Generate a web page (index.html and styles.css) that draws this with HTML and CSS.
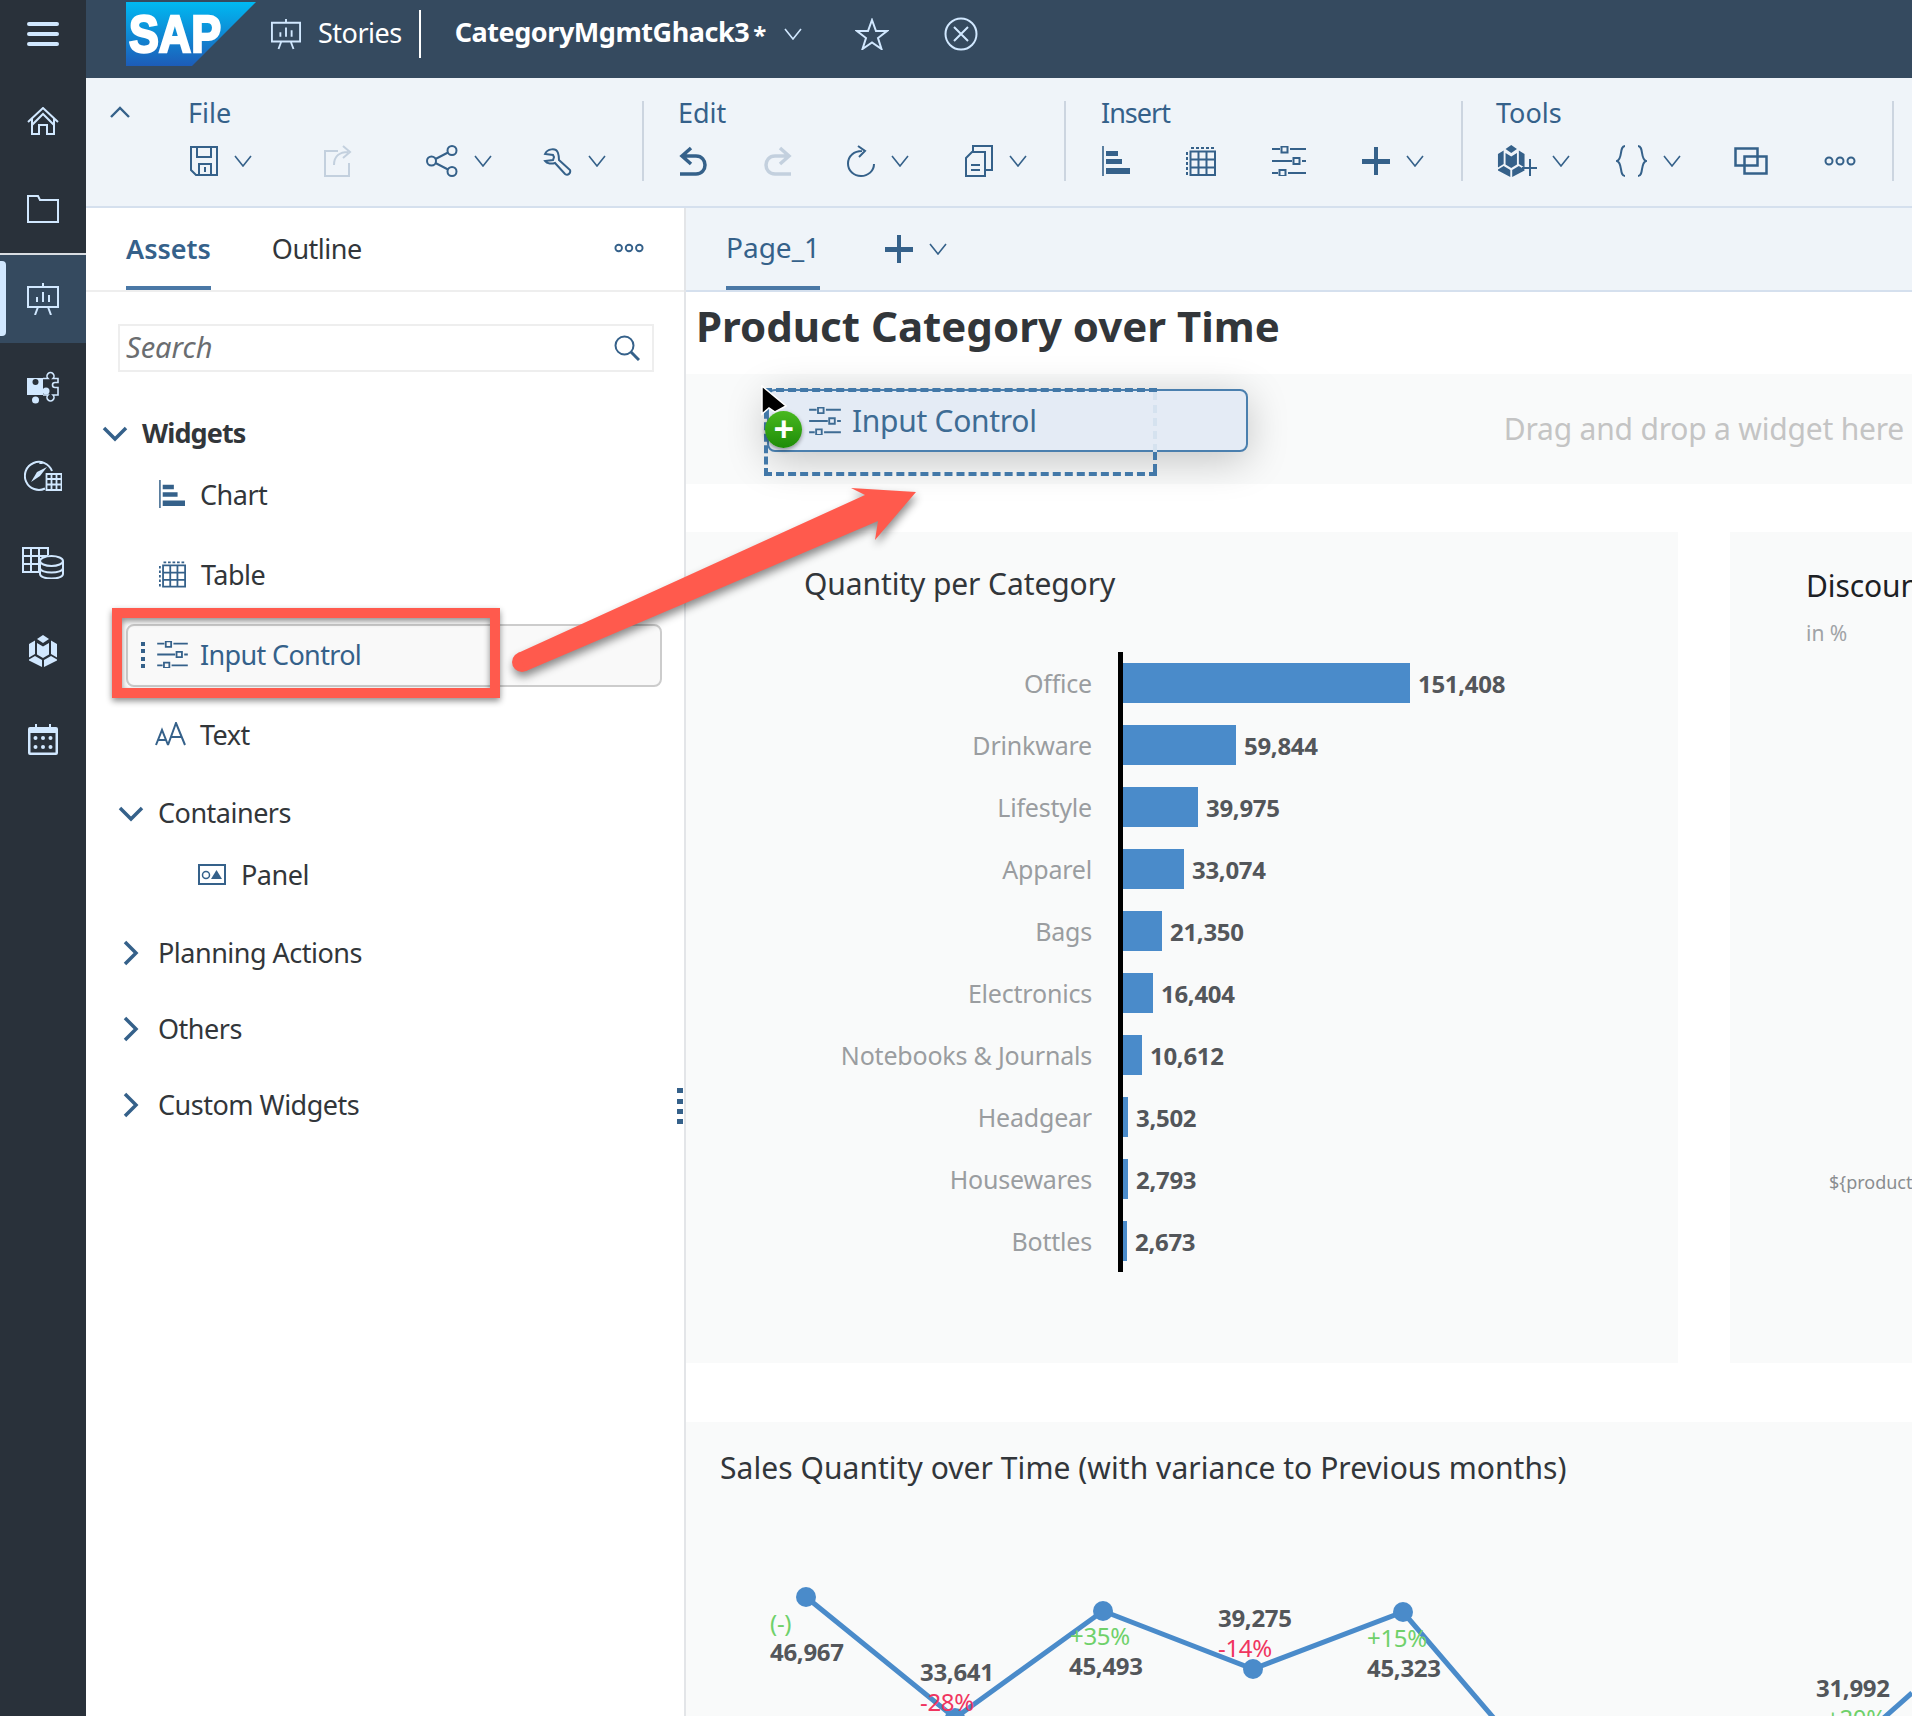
FILE: index.html
```html
<!DOCTYPE html>
<html lang="en">

<head>
    <meta charset="UTF-8">
    <title>CategoryMgmtGhack3 - Stories</title>
    <link rel="stylesheet" href="styles.css">
</head>

<body>

    <!-- shared icons -->
    <svg class="sprite" width="0" height="0">
        <symbol id="i-chev" viewBox="0 0 18 12"><path d="M1 1l8 10 8-10" fill="none" stroke="currentColor" stroke-width="1.6"/></symbol>
        <symbol id="i-chart" viewBox="0 0 28 30">
            <path d="M1 0v30" stroke="currentColor" stroke-width="1.6"/>
            <path d="M4 5h12v5H4zM4 13h16v5H4zM4 22h24v6H4z" fill="currentColor"/>
        </symbol>
        <symbol id="i-table" viewBox="0 0 30 30">
            <path d="M5 2h3M10 2h3M15 2h3M20 2h3M25 2h3M1 6v3M1 11v3M1 16v3M1 21v3M1 26v3" stroke="currentColor" stroke-width="2" fill="none"/>
            <path d="M4.500 5.500h24.500v23.500H4.500zM4.500 13.500h24.500M4.500 21.500h24.500M12.500 5.500v23.500M20.500 5.500v23.500" stroke="currentColor" stroke-width="2" fill="none"/>
        </symbol>
        <symbol id="i-sliders" viewBox="0 0 34 30">
            <path d="M0 3h8M18 3h16M0 15h20M30 15h4M0 27h6M16 27h18" stroke="currentColor" stroke-width="2" fill="none"/>
            <path d="M9.500 0.500h6v6h-6zM21.500 12h6v6h-6zM7.500 24h6v6h-6z" stroke="currentColor" stroke-width="2" fill="none"/>
        </symbol>
        <symbol id="i-cube" viewBox="0 0 30 32">
            <path d="M15 0l6 4-6 4-6-4zM1 9l6-3.500V19l-6 3.500zM29 9l-6-3.500V19l6 3.500zM9 8l6 3.500L21 8v11.500L15 23l-6-3.500zM1 24.500l6-3.500 7 4v7L1 25.500zM29 24.500L23 21l-7 4v7l13-6.500z" fill="currentColor"/>
        </symbol>
    </svg>

    <nav class="side-nav">
        <button class="nav-btn nav-menu">
            <svg width="32" height="24" viewBox="0 0 32 24"><path d="M2 2h28M2 12h28M2 22h28" stroke="currentColor" stroke-width="4" stroke-linecap="round"/></svg>
        </button>
        <button class="nav-btn">
            <svg width="32" height="28" viewBox="0 0 32 28" fill="none" stroke="currentColor" stroke-width="2"><path d="M1 15L16 1l15 14M5 11v16h7v-9h8v9h7V11M5 18L16 7l11 11"/></svg>
        </button>
        <button class="nav-btn nav-folder">
            <svg width="32" height="28" viewBox="0 0 32 28" fill="none" stroke="currentColor" stroke-width="2"><path d="M1 27V1h10l2 4h18v22z"/></svg>
        </button>
        <button class="nav-btn nav-active">
            <svg width="32" height="32" viewBox="0 0 32 32" fill="none" stroke="currentColor" stroke-width="2"><path d="M1 4h30v20H1zM16 0v4M11 24l-3 8M21 24l3 8M10 19v-5M16 19V9M22 19v-7"/></svg>
        </button>
        <button class="nav-btn">
            <svg width="32" height="33" viewBox="0 0 32 33">
                <path d="M0 7h16v17H0z" fill="currentColor"/>
                <circle cx="8.500" cy="29" r="3.500" fill="currentColor"/>
                <circle cx="19" cy="20" r="3.500" fill="currentColor"/>
                <circle cx="8.500" cy="11" r="3" fill="#29313a"/>
                <path d="M16 7.500h5a3.500 3.500 0 1 1 5 0h5v4h-3a2.500 2.500 0 1 0 0 5h3v7.500h-5a3.500 3.500 0 1 1-5 0h-5" fill="none" stroke="currentColor" stroke-width="1.600"/>
            </svg>
        </button>
        <button class="nav-btn">
            <svg width="38" height="32" viewBox="0 0 38 32" fill="none" stroke="currentColor" stroke-width="2"><path d="M21 29.500A14 14 0 1 1 28 12"/><path d="M7 23l6-10 10-5-7 9z" fill="currentColor" stroke="none"/><path d="M15 5l2-3 2 3z" fill="currentColor" stroke="none"/><path d="M22.500 15h15v16h-15zM22.500 20h15M22.500 25.500h15M27.500 15v16M32.500 15v16" stroke-width="1.800"/></svg>
        </button>
        <button class="nav-btn">
            <svg width="42" height="32" viewBox="0 0 42 32" fill="none" stroke="currentColor" stroke-width="2"><path d="M17 25H1V1h25v7M1 9h25M1 17h16M9 1v24M17 1v24"/><ellipse cx="29.500" cy="14" rx="11.500" ry="5"/><path d="M18 14v13c0 6 23 6 23 0V14M18 21c0 6 23 6 23 0"/></svg>
        </button>
        <button class="nav-btn">
            <svg width="30" height="32"><use href="#i-cube"/></svg>
        </button>
        <button class="nav-btn">
            <svg width="30" height="32" viewBox="0 0 30 32"><path d="M2 4h5V1h2v3h12V1h2v3h5a2 2 0 0 1 2 2v24a2 2 0 0 1-2 2H2a2 2 0 0 1-2-2V6a2 2 0 0 1 2-2zM2.500 10v19.500h25V10z" fill="currentColor" fill-rule="evenodd"/><g fill="currentColor"><circle cx="7.500" cy="15" r="2"/><circle cx="15" cy="15" r="2"/><circle cx="22.500" cy="15" r="2"/><circle cx="7.500" cy="24" r="2"/><circle cx="15" cy="24" r="2"/><circle cx="22.500" cy="24" r="2"/></g></svg>
        </button>
    </nav>

    <div class="app">

        <header class="shell-bar">
            <svg class="sap-logo" width="130" height="64" viewBox="0 0 130 64">
                <defs>
                    <linearGradient id="sap-grad" x1="0" y1="0" x2="0" y2="1">
                        <stop offset="0" stop-color="#00b9f2"/>
                        <stop offset="1" stop-color="#1d5cb8"/>
                    </linearGradient>
                </defs>
                <path d="M0 0h130L66 64H0z" fill="url(#sap-grad)"/>
                <text x="3" y="50" textLength="92" lengthAdjust="spacingAndGlyphs" class="sap-word">SAP</text>
            </svg>
            <svg class="shell-icon" width="30" height="32" viewBox="0 0 32 32" fill="none" stroke="currentColor" stroke-width="2"><path d="M1 4h30v20H1zM16 0v4M11 24l-3 8M21 24l3 8M10 19v-5M16 19V9M22 19v-7"/></svg>
            <span class="shell-stories">Stories</span>
            <span class="shell-title">CategoryMgmtGhack3<span class="shell-dirty">*</span></span>
            <svg class="shell-chev"><use href="#i-chev"/></svg>
            <svg class="shell-star" width="34" height="32" viewBox="0 0 34 32"><path d="M17 2l4 11h11l-9 7 3.500 11L17 24.500 7.500 31 11 20l-9-7h11z" fill="none" stroke="currentColor" stroke-width="2"/></svg>
            <svg class="shell-close" width="34" height="34" viewBox="0 0 34 34" fill="none" stroke="currentColor" stroke-width="2"><circle cx="17" cy="17" r="15.500"/><path d="M10 10l14 14M24 10L10 24"/></svg>
        </header>

        <section class="toolbar">
            <svg class="collapse" width="20" height="12" viewBox="0 0 20 12"><path d="M1 11l9-9 9 9" fill="none" stroke="currentColor" stroke-width="2.400"/></svg>

            <div class="tool-group group-file">
                <div class="group-label">File</div>
                <div class="tools">
                    <div class="tool">
                        <svg width="28" height="30" viewBox="0 0 28 30" fill="none" stroke="currentColor" stroke-width="2"><path d="M1 1h26v28H6l-5-5zM7 1v10h14V1M9 29V18h12v11M15 21v5"/></svg>
                        <svg class="chev"><use href="#i-chev"/></svg>
                    </div>
                    <div class="tool tool-off">
                        <svg width="32" height="32" viewBox="0 0 32 32" fill="none" stroke="currentColor" stroke-width="2"><path d="M14 6H1v25h24V18M10 20c0-9 6-13 14-13M19 1l7 6-7 6"/></svg>
                    </div>
                    <div class="tool">
                        <svg width="32" height="32" viewBox="0 0 32 32" fill="none" stroke="currentColor" stroke-width="2"><circle cx="5.500" cy="16" r="4.500"/><circle cx="26" cy="5.500" r="4.500"/><circle cx="26" cy="26.500" r="4.500"/><path d="M9.500 14L22 7.500M9.500 18L22 24.500"/></svg>
                        <svg class="chev"><use href="#i-chev"/></svg>
                    </div>
                    <div class="tool">
                        <svg width="29" height="29" viewBox="0 0 29 29" fill="none" stroke="currentColor" stroke-width="2"><path d="M2 7C4 2 13 0 15 6c1 3 1 5 1 7l11 10c1 3-2 6-5 4L12 16c-3 1-8 1-10-2l8-1 1-3-1-2z"/></svg>
                        <svg class="chev"><use href="#i-chev"/></svg>
                    </div>
                </div>
            </div>

            <div class="tool-group group-edit">
                <div class="group-label">Edit</div>
                <div class="tools">
                    <div class="tool">
                        <svg width="28" height="30" viewBox="0 0 28 30" fill="none" stroke="currentColor" stroke-width="3.500"><path d="M12 2L3 10l9 8M3 10h14c12 0 12 18 0 18H1"/></svg>
                    </div>
                    <div class="tool tool-off">
                        <svg width="28" height="30" viewBox="0 0 28 30" fill="none" stroke="currentColor" stroke-width="3.500"><path d="M16 2l9 8-9 8M25 10H11C-1 10-1 28 11 28h16"/></svg>
                    </div>
                    <div class="tool">
                        <svg width="28" height="32" viewBox="0 0 28 32" fill="none" stroke="currentColor" stroke-width="2"><path d="M15 6C7 6 1 11 1 18.500S7 31 14 31s13-5 13-12M11 1l7 5-6 6"/></svg>
                        <svg class="chev"><use href="#i-chev"/></svg>
                    </div>
                    <div class="tool">
                        <svg width="28" height="32" viewBox="0 0 28 32" fill="none" stroke="currentColor" stroke-width="2"><path d="M1 13l6-6h13v24H1zM8 7V1h19v24h-7M6 20h9M6 25h9"/></svg>
                        <svg class="chev"><use href="#i-chev"/></svg>
                    </div>
                </div>
            </div>

            <div class="tool-group group-insert">
                <div class="group-label">Insert</div>
                <div class="tools">
                    <div class="tool"><svg width="28" height="30"><use href="#i-chart"/></svg></div>
                    <div class="tool"><svg width="30" height="30"><use href="#i-table"/></svg></div>
                    <div class="tool"><svg width="34" height="30"><use href="#i-sliders"/></svg></div>
                    <div class="tool">
                        <svg width="28" height="28" viewBox="0 0 28 28"><path d="M12 0h4v12h12v5H16v11h-4V17H0v-5h12z" fill="currentColor"/></svg>
                        <svg class="chev"><use href="#i-chev"/></svg>
                    </div>
                </div>
            </div>

            <div class="tool-group group-tools">
                <div class="group-label">Tools</div>
                <div class="tools">
                    <div class="tool">
                        <svg width="40" height="32" viewBox="0 0 40 32"><g transform="scale(.95 1)"><use href="#i-cube" width="30" height="32"/></g><path d="M33 14v17M25 23h15" stroke="currentColor" stroke-width="2"/></svg>
                        <svg class="chev chev-tight"><use href="#i-chev"/></svg>
                    </div>
                    <div class="tool">
                        <svg width="31" height="32" viewBox="0 0 31 32" fill="none" stroke="currentColor" stroke-width="2"><path d="M9 1C3 1 7 14 1 16c6 2 2 15 8 15M22 1c6 0 2 13 8 15-6 2-2 15-8 15"/></svg>
                        <svg class="chev"><use href="#i-chev"/></svg>
                    </div>
                    <div class="tool">
                        <svg width="34" height="28" viewBox="0 0 34 28" fill="none" stroke="currentColor" stroke-width="2.500"><path d="M1.500 1.500h22v17h-22zM10.500 9.500h22v17h-22z"/></svg>
                    </div>
                    <div class="tool">
                        <svg width="32" height="10" viewBox="0 0 32 10" fill="none" stroke="currentColor" stroke-width="2"><circle cx="5" cy="5" r="3.500"/><circle cx="16" cy="5" r="3.500"/><circle cx="27" cy="5" r="3.500"/></svg>
                    </div>
                </div>
            </div>
        </section>

        <div class="workspace">

            <aside class="assets">
                <div class="asset-tabs">
                    <span class="asset-tab asset-tab-on">Assets</span>
                    <span class="asset-tab">Outline</span>
                    <svg class="asset-more" width="30" height="10" viewBox="0 0 32 10" fill="none" stroke="currentColor" stroke-width="2"><circle cx="5" cy="5" r="3.500"/><circle cx="16" cy="5" r="3.500"/><circle cx="27" cy="5" r="3.500"/></svg>
                </div>

                <div class="search">
                    <span>Search</span>
                    <svg width="26" height="26" viewBox="0 0 26 26" fill="none" stroke="currentColor" stroke-width="2"><circle cx="10.500" cy="10.500" r="9"/><path d="M17 17l8 8" stroke-width="3"/></svg>
                </div>

                <ul class="tree">
                    <li class="tree-head tree-main">
                        <svg class="caret-down" viewBox="0 0 26 16"><path d="M2 2l11 11L24 2" fill="none" stroke="currentColor" stroke-width="3.500"/></svg>
                        Widgets
                    </li>
                    <li class="tree-item">
                        <svg width="26" height="28"><use href="#i-chart"/></svg>
                        Chart
                    </li>
                    <li class="tree-item">
                        <svg width="27" height="28"><use href="#i-table"/></svg>
                        Table
                    </li>
                    <li class="tree-item tree-picked">
                        <svg class="grip" width="4" height="26" viewBox="0 0 4 26"><path d="M0 0h4v4H0zM0 7h4v4H0zM0 15h4v4H0zM0 22h4v4H0z" fill="currentColor"/></svg>
                        <svg width="31" height="27"><use href="#i-sliders"/></svg>
                        Input Control
                        <div class="callout"></div>
                    </li>
                    <li class="tree-item tree-text">
                        <svg width="33" height="24" viewBox="0 0 33 24" fill="none" stroke="currentColor" stroke-width="2"><path d="M1 23L7 8l6 15M3 18h8M13 23l8-22 9 22M16 15h11"/></svg>
                        Text
                    </li>
                    <li class="tree-head tree-open">
                        <svg class="caret-down" viewBox="0 0 26 16"><path d="M2 2l11 11L24 2" fill="none" stroke="currentColor" stroke-width="3.500"/></svg>
                        Containers
                    </li>
                    <li class="tree-item tree-panel">
                        <svg width="28" height="21" viewBox="0 0 28 21"><path d="M1 1h26v19H1z" fill="none" stroke="currentColor" stroke-width="2"/><circle cx="8" cy="11" r="3.500" fill="none" stroke="currentColor" stroke-width="1.500"/><path d="M13 15l5.500-9 5.500 9z" fill="currentColor"/></svg>
                        Panel
                    </li>
                    <li class="tree-head">
                        <svg class="caret-right" viewBox="0 0 16 26"><path d="M2 2l11 11L2 24" fill="none" stroke="currentColor" stroke-width="3.500"/></svg>
                        Planning Actions
                    </li>
                    <li class="tree-head">
                        <svg class="caret-right" viewBox="0 0 16 26"><path d="M2 2l11 11L2 24" fill="none" stroke="currentColor" stroke-width="3.500"/></svg>
                        Others
                    </li>
                    <li class="tree-head">
                        <svg class="caret-right" viewBox="0 0 16 26"><path d="M2 2l11 11L2 24" fill="none" stroke="currentColor" stroke-width="3.500"/></svg>
                        Custom Widgets
                    </li>
                </ul>

                <svg class="resize-grip" width="6" height="36" viewBox="0 0 6 36"><path d="M0 0h6v5H0zM0 11h6v5H0zM0 21h6v5H0zM0 31h6v5H0z" fill="currentColor"/></svg>
            </aside>

            <main class="canvas">
                <div class="page-tabs">
                    <span class="page-tab">Page_1</span>
                    <svg class="page-add" width="28" height="28" viewBox="0 0 28 28"><path d="M12 0h4v12h12v5H16v11h-4V17H0v-5h12z" fill="currentColor"/></svg>
                    <svg class="chev"><use href="#i-chev"/></svg>
                </div>

                <div class="story">
                    <h1 class="story-title">Product Category over Time</h1>

                    <div class="drop-zone">
                        <span class="drop-hint">Drag and drop a widget here</span>
                        <div class="drag-ghost">
                            <svg width="34" height="28"><use href="#i-sliders"/></svg>
                            Input Control
                        </div>
                        <div class="drag-outline"></div>
                        <svg class="drag-cursor" width="26" height="34" viewBox="0 0 26 34"><path d="M1 1v28l7-6 6 4 11-6z" fill="#000" stroke="#fff" stroke-width="1.500"/></svg>
                        <div class="drag-add">+</div>
                    </div>

                    <div class="card-row">
                        <section class="card card-bars">
                            <h2 class="card-title">Quantity per Category</h2>
                            <div class="bars">
                                <div class="bar-row"><span class="bar-label">Office</span><div class="bar-track"><i style="width: 287px"></i><b>151,408</b></div></div>
                                <div class="bar-row"><span class="bar-label">Drinkware</span><div class="bar-track"><i style="width: 113px"></i><b>59,844</b></div></div>
                                <div class="bar-row"><span class="bar-label">Lifestyle</span><div class="bar-track"><i style="width: 75px"></i><b>39,975</b></div></div>
                                <div class="bar-row"><span class="bar-label">Apparel</span><div class="bar-track"><i style="width: 61px"></i><b>33,074</b></div></div>
                                <div class="bar-row"><span class="bar-label">Bags</span><div class="bar-track"><i style="width: 39px"></i><b>21,350</b></div></div>
                                <div class="bar-row"><span class="bar-label">Electronics</span><div class="bar-track"><i style="width: 30px"></i><b>16,404</b></div></div>
                                <div class="bar-row"><span class="bar-label">Notebooks &amp; Journals</span><div class="bar-track"><i style="width: 19px"></i><b>10,612</b></div></div>
                                <div class="bar-row"><span class="bar-label">Headgear</span><div class="bar-track"><i style="width: 5px"></i><b>3,502</b></div></div>
                                <div class="bar-row"><span class="bar-label">Housewares</span><div class="bar-track"><i style="width: 5px"></i><b>2,793</b></div></div>
                                <div class="bar-row"><span class="bar-label">Bottles</span><div class="bar-track"><i style="width: 4px"></i><b>2,673</b></div></div>
                            </div>
                        </section>

                        <section class="card card-discount">
                            <h2 class="card-title">Discount</h2>
                            <div class="card-sub">in %</div>
                            <div class="card-token">${productCategory}</div>
                        </section>
                    </div>

                    <section class="card card-line">
                        <h2 class="card-title">Sales Quantity over Time (with variance to Previous months)</h2>
                        <svg class="line-chart" width="1226" height="228" viewBox="686 1488 1226 228">
                            <polyline class="line" points="806,1597 955,1718 1103,1611 1253,1669 1403,1612 1504,1730"/>
                            <polyline class="line" points="1870,1730 1912,1693"/>
                            <circle class="dot" cx="806" cy="1597" r="10"/>
                            <circle class="dot" cx="955" cy="1718" r="10"/>
                            <circle class="dot" cx="1103" cy="1611" r="10"/>
                            <circle class="dot" cx="1253" cy="1669" r="10"/>
                            <circle class="dot" cx="1403" cy="1612" r="10"/>
                            <text class="val" x="770" y="1661">46,967</text>
                            <text class="up" x="770" y="1632">(-)</text>
                            <text class="val" x="920" y="1681">33,641</text>
                            <text class="down" x="920" y="1711">-28%</text>
                            <text class="up" x="1070" y="1645">+35%</text>
                            <text class="val" x="1069" y="1675">45,493</text>
                            <text class="val" x="1218" y="1627">39,275</text>
                            <text class="down" x="1218" y="1657">-14%</text>
                            <text class="up" x="1367" y="1647">+15%</text>
                            <text class="val" x="1367" y="1677">45,323</text>
                            <text class="val" x="1816" y="1697">31,992</text>
                            <text class="up" x="1826" y="1727">+20%</text>
                        </svg>
                    </section>
                </div>
            </main>
        </div>
    </div>

    <!-- annotation drawn over the screenshot -->
    <svg class="arrow" width="440" height="210" viewBox="500 470 440 210">
        <circle cx="522" cy="662" r="10"/>
        <polygon points="518,653 865,495 851,488 916,492 875,540 878,521 526,671"/>
    </svg>

</body>

</html>
```

FILE: styles.css
```css
* {
    box-sizing: border-box;
}

html,
body {
    margin: 0;
    width: 1912px;
    height: 1716px;
    overflow: hidden;
}

body {
    display: flex;
    position: relative;
    font-family: "Noto Sans", Arial, sans-serif;
    font-size: 27px;
    letter-spacing: -.5px;
    color: #32363a;
    background-color: #fff;
}

.sprite {
    position: absolute;
}

svg {
    display: block;
    flex: none;
}

/* left rail */

.side-nav {
    width: 86px;
    flex: none;
    display: flex;
    flex-direction: column;
    background-color: #29313a;
    color: #d1e8ff;
}

.nav-btn {
    height: 88px;
    padding: 0;
    border: 0;
    background: none;
    color: inherit;
    display: flex;
    align-items: center;
    justify-content: center;
}

.nav-menu {
    height: 77px;
    padding-bottom: 10px;
}

.nav-folder {
    height: 90px;
    border-bottom: 2px solid #d9dde2;
}

.nav-active {
    position: relative;
    background-color: #354a5f;
}

.nav-active::before {
    content: "";
    position: absolute;
    left: 0;
    top: 6px;
    bottom: 7px;
    width: 6px;
    border-radius: 0 4px 4px 0;
    background-color: #d1e8ff;
}

.app {
    flex: 1;
    min-width: 0;
    display: flex;
    flex-direction: column;
}

/* top bar */

.shell-bar {
    height: 78px;
    flex: none;
    display: flex;
    align-items: center;
    padding: 0 0 10px 40px;
    background-color: #354a5f;
    color: #d1e8ff;
}

.sap-word {
    font-family: "Liberation Sans", Arial, sans-serif;
    font-weight: 700;
    font-size: 52px;
    fill: #fff;
    stroke: #fff;
    stroke-width: 2.5px;
    letter-spacing: 0;
}

.shell-icon {
    margin-left: 15px;
}

.shell-stories {
    margin-left: 17px;
    padding-right: 17px;
    height: 48px;
    line-height: 46px;
    color: #fff;
    border-right: 2px solid #fff;
}

.shell-title {
    margin: 0 0 4px 34px;
    font-weight: 700;
    letter-spacing: -.45px;
    color: #fff;
    white-space: nowrap;
}

.shell-dirty {
    margin-left: 4px;
    font-size: 24px;
    vertical-align: -2px;
}

.shell-chev {
    width: 18px;
    height: 12px;
    margin-left: 18px;
}

.shell-star {
    margin-left: 53px;
}

.shell-close {
    margin-left: 55px;
}

/* ribbon */

.toolbar {
    height: 130px;
    flex: none;
    display: flex;
    position: relative;
    padding-top: 23px;
    background-color: #eff4f9;
    border-bottom: 2px solid #d5e0ee;
    color: #35618a;
}

.collapse {
    position: absolute;
    left: 24px;
    top: 28px;
}

.tool-group {
    height: 80px;
    border-right: 2px solid #ccd5e0;
    letter-spacing: 0;
}

.group-file {
    width: 558px;
    padding-left: 102px;
}

.group-edit {
    width: 422px;
    padding-left: 34px;
}

.group-insert {
    width: 397px;
    padding-left: 35px;
}

.group-tools {
    width: 431px;
    padding-left: 33px;
}

.group-label {
    height: 32px;
    line-height: 24px;
    white-space: nowrap;
}

.group-insert .group-label {
    letter-spacing: -1px;
}

.tools {
    display: grid;
    height: 56px;
    align-items: center;
}

.group-file .tools {
    grid-template-columns: 134px 102px 117px auto;
    padding-left: 2px;
}

.group-edit .tools {
    grid-template-columns: 85px 83px 118px auto;
    padding-left: 1px;
}

.group-insert .tools {
    grid-template-columns: 84px 86px 90px auto;
    padding-left: 1px;
}

.group-tools .tools {
    grid-template-columns: 119px 118px 90px auto;
    padding-left: 1px;
}

.tool {
    display: flex;
    align-items: center;
}

.tool-off {
    color: #c3d0de;
}

.chev {
    width: 18px;
    height: 12px;
    margin-left: 16px;
}

.chev-tight {
    margin-left: 15px;
}

/* body split */

.workspace {
    flex: 1;
    min-height: 0;
    display: flex;
}

.assets {
    width: 600px;
    flex: none;
    position: relative;
    border-right: 2px solid #e3e5e8;
}

.asset-tabs {
    height: 84px;
    display: flex;
    align-items: flex-start;
    padding-left: 40px;
    border-bottom: 2px solid #eeeeee;
}

.asset-tab {
    height: 82px;
    line-height: 82px;
    margin-right: 61px;
}

.asset-tab-on {
    font-weight: 600;
    letter-spacing: 0;
    color: #35618a;
    border-bottom: 4px solid #4a78a6;
}

.asset-more {
    position: absolute;
    left: 528px;
    top: 35px;
    color: #35618a;
}

.search {
    width: 536px;
    height: 48px;
    margin: 32px 0 0 32px;
    padding: 0 12px 0 6px;
    display: flex;
    align-items: center;
    justify-content: space-between;
    border: 2px solid #eeeeee;
    font-style: italic;
    font-size: 29px;
    letter-spacing: 0;
    line-height: 40px;
    color: #6a6d70;
}

.search span {
    margin-top: -3px;
}

.search svg {
    color: #35618a;
}

.tree {
    list-style: none;
    margin: 39px 0 0;
    padding: 0;
}

.tree-head {
    height: 76px;
    display: flex;
    align-items: center;
    padding: 0 0 2px 72px;
    position: relative;
}

.tree-main {
    height: 44px;
    padding-left: 56px;
    font-weight: 700;
    letter-spacing: -.9px;
}

.caret-down,
.caret-right {
    position: absolute;
    color: #35618a;
}

.caret-down {
    width: 26px;
    height: 16px;
    left: 16px;
    top: 50%;
    margin-top: -7px;
}

.tree-open .caret-down {
    left: 32px;
}

.caret-right {
    width: 16px;
    height: 26px;
    left: 37px;
    top: 25px;
}

.tree-item {
    height: 80px;
    display: flex;
    align-items: center;
    gap: 15px;
    padding: 0 0 2px 73px;
    position: relative;
}

.tree-item svg {
    color: #35618a;
}

.tree-picked {
    height: 63px;
    width: 536px;
    margin: 9px 0 8px 40px;
    padding-left: 13px;
    gap: 12px;
    letter-spacing: -.65px;
    border: 2px solid #cccccc;
    border-radius: 8px;
    background-color: #f9f9f9;
    color: #35618a;
}

.callout {
    position: absolute;
    left: -16px;
    top: -18px;
    width: 388px;
    height: 90px;
    border: 10px solid #ff5a4d;
    filter: drop-shadow(0 3px 3px rgba(0, 0, 0, .45));
}

.tree-text {
    padding-left: 69px;
    gap: 12px;
}

.tree-panel {
    height: 48px;
    margin-bottom: 16px;
    padding-left: 112px;
}

.resize-grip {
    position: absolute;
    right: 1px;
    top: 880px;
    color: #35618a;
}

/* story canvas */

.canvas {
    flex: 1;
    min-width: 0;
    display: flex;
    flex-direction: column;
}

.page-tabs {
    height: 84px;
    flex: none;
    display: flex;
    align-items: center;
    padding-left: 40px;
    background-color: #eff4f9;
    border-bottom: 2px solid #d5e0ee;
    color: #35618a;
}

.page-tab {
    align-self: flex-start;
    height: 82px;
    line-height: 79px;
    font-size: 28px;
    letter-spacing: 0;
    border-bottom: 4px solid #4a78a6;
}

.page-add {
    margin-left: 65px;
}

.story {
    flex: 1;
    min-height: 0;
    display: flex;
    flex-direction: column;
}

.story-title {
    height: 82px;
    flex: none;
    margin: 0;
    padding: 3px 0 0 10px;
    font-size: 42px;
    line-height: 62px;
    font-weight: 700;
    letter-spacing: 0;
}

.drop-zone {
    height: 110px;
    flex: none;
    position: relative;
    display: flex;
    align-items: center;
    justify-content: flex-end;
    padding: 0 8px 2px 0;
    background-color: #f9fafa;
}

.drop-hint {
    font-size: 30px;
    letter-spacing: -.2px;
    color: #c4c4c4;
}

.drag-ghost {
    position: absolute;
    left: 81px;
    top: 15px;
    width: 481px;
    height: 63px;
    display: flex;
    align-items: center;
    gap: 10px;
    padding-left: 39px;
    font-size: 30px;
    letter-spacing: -.3px;
    color: #3e6c94;
    background-color: #e4ebf5;
    border: 2px solid #4a7fae;
    border-radius: 8px;
    box-shadow: 0 8px 40px rgba(0, 0, 0, .22);
}

.drag-outline {
    position: absolute;
    left: 78px;
    top: 14px;
    width: 393px;
    height: 88px;
    border: 4px dashed #4278a8;
    border-right: 0;
}

.drag-outline::before,
.drag-outline::after {
    content: "";
    position: absolute;
    right: 0;
    border-right: 4px dashed #4278a8;
}

.drag-outline::before {
    top: 0;
    height: 60px;
    border-right-color: #d5e2ef;
}

.drag-outline::after {
    top: 60px;
    bottom: 0;
}

.drag-cursor {
    position: absolute;
    left: 75px;
    top: 11px;
}

.drag-add {
    position: absolute;
    left: 79px;
    top: 37px;
    width: 37px;
    height: 37px;
    border-radius: 50%;
    text-align: center;
    font-size: 36px;
    font-weight: 700;
    line-height: 35px;
    color: #fff;
    background: linear-gradient(#48b81f, #1e8c08);
    box-shadow: 0 2px 4px rgba(0, 0, 0, .4);
}

.card-row {
    display: flex;
    gap: 52px;
    margin-top: 48px;
    height: 831px;
    flex: none;
}

.card {
    background-color: #f9fafa;
    overflow: hidden;
}

.card-title {
    margin: 0;
    height: 40px;
    line-height: 38px;
    font-size: 30px;
    font-weight: 400;
    letter-spacing: -.1px;
    white-space: nowrap;
}

.card-bars {
    width: 992px;
    flex: none;
    padding: 33px 0 0 118px;
}

.bars {
    margin: 47px 0 0 -118px;
}

.bar-row {
    height: 62px;
    display: flex;
    align-items: center;
}

.bar-label {
    width: 406px;
    flex: none;
    text-align: right;
    font-size: 25px;
    letter-spacing: -.2px;
    color: #9a9da0;
    white-space: nowrap;
}

.bar-track {
    height: 62px;
    margin-left: 26px;
    display: flex;
    align-items: center;
    border-left: 5px solid #000;
}

.bar-track i {
    display: block;
    height: 40px;
    background-color: #4a8bca;
}

.bar-track b {
    margin-left: 8px;
    font-size: 24px;
    font-weight: 700;
    letter-spacing: -.3px;
    color: #53565a;
}

.card-discount {
    flex: 1;
    min-width: 0;
    padding: 35px 0 0 76px;
}

.card-discount .card-title {
    color: #1d2125;
}

.card-sub {
    margin-top: 12px;
    font-size: 21px;
    letter-spacing: 0;
    color: #a0a3a6;
}

.card-token {
    margin: 523px 0 0 23px;
    font-size: 18px;
    letter-spacing: 0;
    color: #8a8d90;
    white-space: nowrap;
}

.card-line {
    margin-top: 59px;
    flex: 1;
    padding-top: 27px;
}

.card-line .card-title {
    height: 39px;
    padding-left: 34px;
    letter-spacing: .05px;
}

.line {
    fill: none;
    stroke: #4a8bca;
    stroke-width: 5;
}

.dot {
    fill: #4a8bca;
}

.line-chart text {
    font-size: 24px;
    letter-spacing: -.3px;
}

.val {
    font-weight: 700;
    fill: #53565a;
}

.up {
    fill: #6fd16a;
}

.down {
    fill: #f0355f;
}

/* red annotation arrow */

.arrow {
    position: absolute;
    left: 500px;
    top: 470px;
    fill: #ff5a4d;
    filter: drop-shadow(1px 5px 4px rgba(0, 0, 0, .45));
}
```
